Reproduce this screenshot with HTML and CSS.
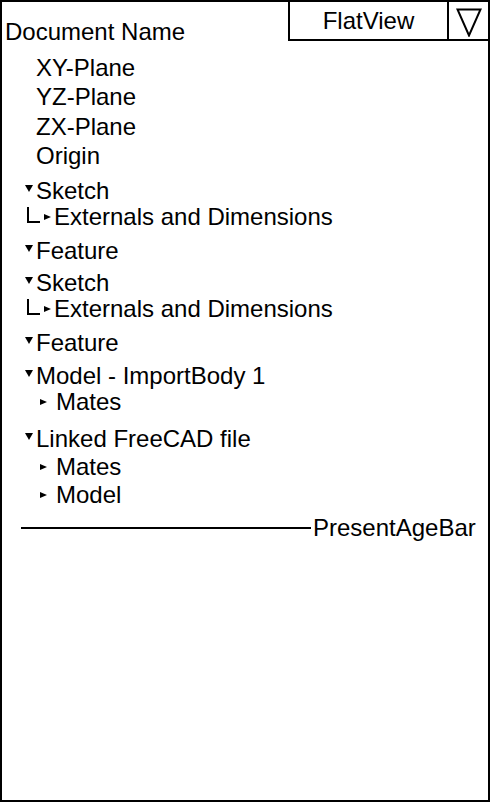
FILE: index.html
```html
<!DOCTYPE html>
<html lang="en">
<head>
<meta charset="utf-8">
<title>Document tree</title>
<link rel="stylesheet" href="styles.css">
</head>
<body>
<div class="frame">
  <div class="header">
    <div class="doc-name">Document Name</div>
    <div class="view-select">
      <div class="view-label">FlatView</div>
      <div class="view-btn">
        <svg class="view-arrow" width="26" height="29" viewBox="0 0 26 29"><polygon points="1.5,1.5 24.5,1.5 13,27.5" fill="none" stroke="#000" stroke-width="2" stroke-linejoin="miter"/></svg>
      </div>
    </div>
  </div>
  <div class="tree">
    <div class="group planes">
      <div class="row plain">XY-Plane</div>
      <div class="row plain">YZ-Plane</div>
      <div class="row plain">ZX-Plane</div>
      <div class="row plain">Origin</div>
    </div>
    <div class="group">
      <div class="row node"><span class="caret-down"></span>Sketch</div>
      <div class="row child"><span class="elbow"></span><span class="caret-right"></span>Externals and Dimensions</div>
    </div>
    <div class="group">
      <div class="row node"><span class="caret-down"></span>Feature</div>
    </div>
    <div class="group g-tight">
      <div class="row node"><span class="caret-down"></span>Sketch</div>
      <div class="row child"><span class="elbow"></span><span class="caret-right"></span>Externals and Dimensions</div>
    </div>
    <div class="group">
      <div class="row node"><span class="caret-down"></span>Feature</div>
    </div>
    <div class="group g-snug">
      <div class="row node"><span class="caret-down"></span>Model - ImportBody 1</div>
      <div class="row sub"><span class="caret-right"></span>Mates</div>
    </div>
    <div class="group linked g-wide">
      <div class="row node"><span class="caret-down"></span>Linked FreeCAD file</div>
      <div class="row sub"><span class="caret-right"></span>Mates</div>
      <div class="row sub"><span class="caret-right"></span>Model</div>
    </div>
    <div class="bar-row">
      <span class="bar-line"></span>
      <span class="bar-label">PresentAgeBar</span>
    </div>
  </div>
</div>
</body>
</html>
```
FILE: styles.css
```css
html, body {
  margin: 0;
  padding: 0;
  background: #fff;
}

body {
  font-family: "Liberation Sans", Arial, sans-serif;
  font-size: 24px;
  color: #000;
}

.frame {
  width: 490px;
  height: 802px;
  box-sizing: border-box;
  border: 2px solid #000;
  display: flex;
  flex-direction: column;
}

.header {
  display: flex;
  justify-content: space-between;
  align-items: flex-start;
}

.doc-name {
  margin: 17px 0 0 3px;
  line-height: 26px;
}

.view-select {
  display: flex;
  width: 200px;
  height: 39px;
  box-sizing: border-box;
  border-left: 2px solid #000;
  border-bottom: 2px solid #000;
}

.view-label {
  flex: 1;
  text-align: center;
  line-height: 37px;
  padding-top: 0;
}

.view-btn {
  width: 41px;
  box-sizing: border-box;
  border-left: 2px solid #000;
  display: flex;
  justify-content: center;
  align-items: flex-start;
}

.view-arrow {
  display: block;
  margin-top: 6px;
  margin-left: 1px;
}

.tree {
  display: flex;
  flex-direction: column;
  gap: 8px;
  padding-top: 10px;
}

.group {
  display: flex;
  flex-direction: column;
}

.planes {
  gap: 3.33px;
  margin-bottom: 1px;
}

.linked {
  gap: 2px;
}

.g-tight { margin-top: -2px; }
.g-snug { margin-top: -1px; }
.g-wide { margin-top: 3px; }

.row {
  display: flex;
  align-items: flex-start;
  height: 26px;
  line-height: 26px;
  white-space: nowrap;
}

.plain { padding-left: 34px; }

.node { padding-left: 23px; }

.child { padding-left: 25px; }

.sub { padding-left: 38px; }

.caret-down {
  width: 0;
  height: 0;
  border-left: 4px solid transparent;
  border-right: 4px solid transparent;
  border-top: 7px solid #000;
  margin: 7px 3px 0 0;
}

.caret-right {
  width: 0;
  height: 0;
  border-top: 3.5px solid transparent;
  border-bottom: 3.5px solid transparent;
  border-left: 7px solid #000;
  margin-top: 10px;
}

.child .caret-right { margin-right: 3px; }

.sub .caret-right { margin-right: 9px; }

.elbow {
  width: 11px;
  height: 14px;
  border-left: 2px solid #000;
  border-bottom: 2px solid #000;
  margin: 3px 4px 0 0;
}

.bar-row {
  display: flex;
  align-items: center;
  height: 26px;
  line-height: 26px;
  padding-left: 19px;
  margin-top: -1px;
}

.bar-line {
  width: 290px;
  height: 2px;
  background: #000;
  margin-right: 2px;
  margin-top: 0;
}

.bar-label {
  white-space: nowrap;
}
```
